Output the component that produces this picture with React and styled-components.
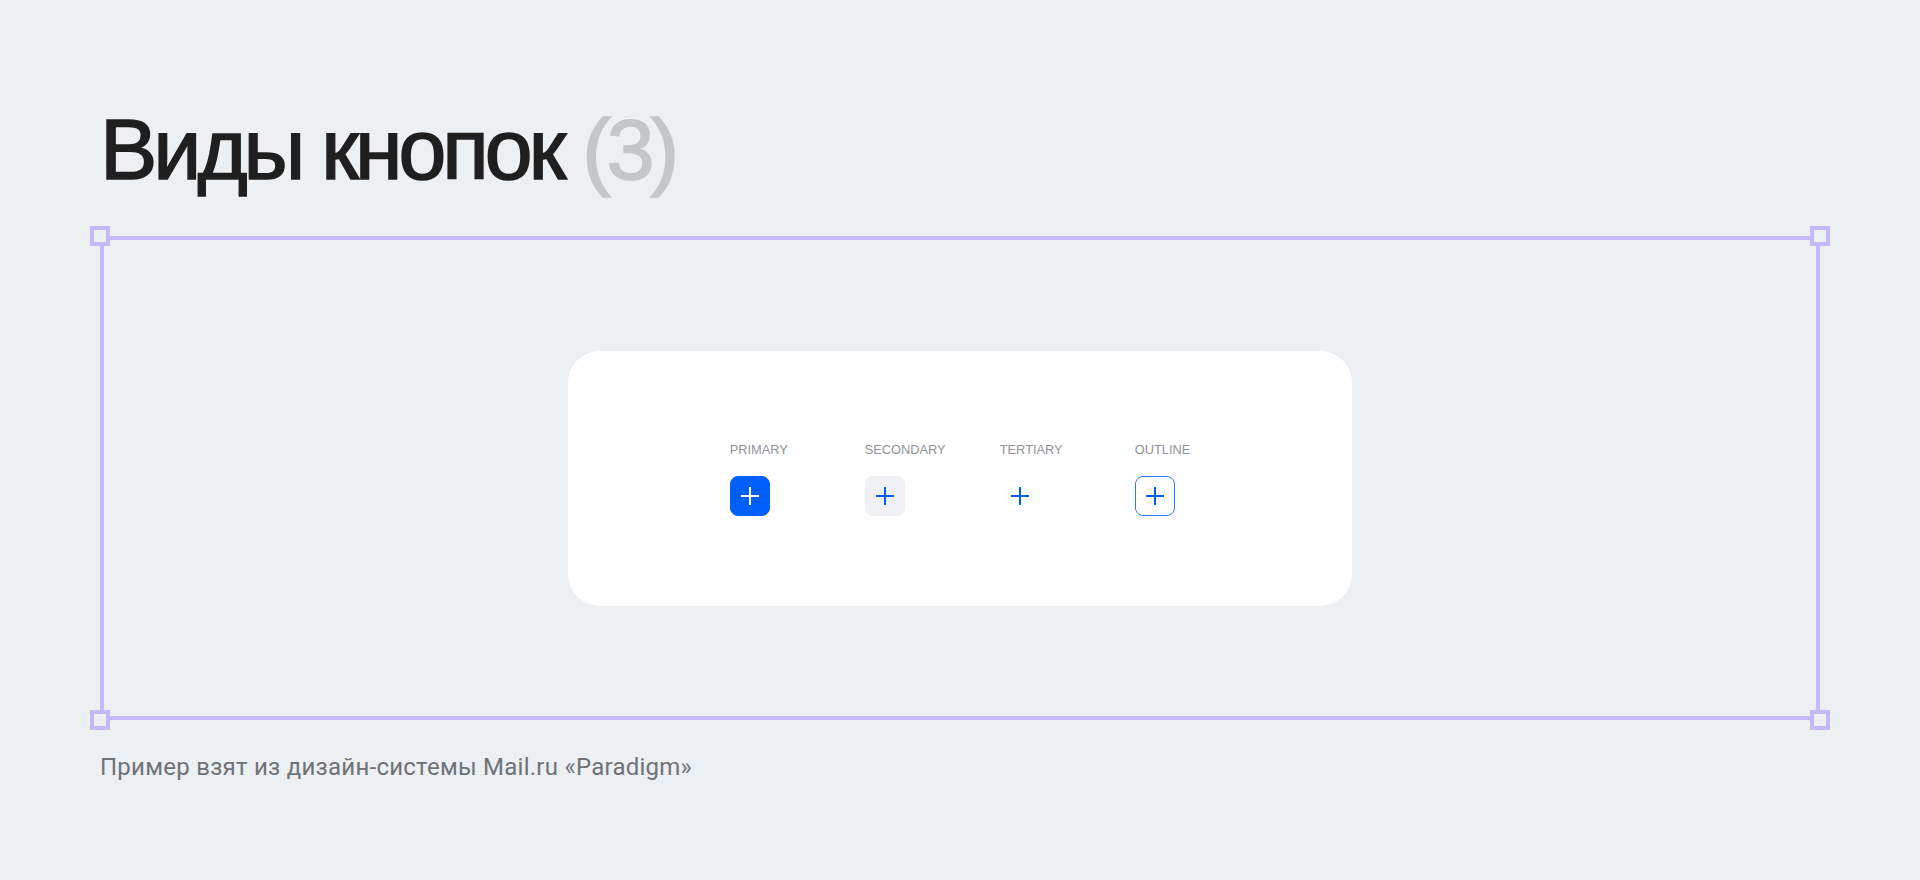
import React from "react";
import styled, { createGlobalStyle } from "styled-components";

const Global = createGlobalStyle`
  html, body { margin: 0; padding: 0; background: #edf0f3; }
  body { font-family: "Liberation Sans", Arial, sans-serif; }
`;

const Page = styled.div`
  box-sizing: border-box;
  width: 1920px;
  height: 880px;
  padding: 106px 100px 0;
  display: flex;
  flex-direction: column;
`;

const Title = styled.h1`
  margin: 0 0 44px;
  font-family: "Liberation Sans", Arial, sans-serif;
  font-weight: 400;
  font-size: 86px;
  line-height: 86px;
  letter-spacing: -4px;
  color: #1f1f1f;
  -webkit-text-stroke: 1.6px #1f1f1f;
`;

const Count = styled.span`
  color: #c3c7ca;
  -webkit-text-stroke: 1.6px #c3c7ca;
`;

const Frame = styled.div`
  position: relative;
  box-sizing: border-box;
  height: 484px;
  border: 4px solid #c6b9fa;
  display: flex;
  align-items: center;
  justify-content: center;
`;

const Handle = styled.span`
  position: absolute;
  box-sizing: border-box;
  width: 20px;
  height: 20px;
  border: 4px solid #c6b9fa;
  background: #edf0f3;
  ${(p) => (p.$top ? "top: -14px;" : "bottom: -14px;")}
  ${(p) => (p.$left ? "left: -14px;" : "right: -14px;")}
`;

const Card = styled.div`
  width: 784px;
  height: 255px;
  background: #ffffff;
  border-radius: 32px;
  display: flex;
  align-items: center;
  justify-content: center;
`;

const Row = styled.div`
  display: flex;
  align-items: flex-start;
  padding-top: 2px;
`;

const Column = styled.div`
  width: 135px;
  display: flex;
  flex-direction: column;
  align-items: flex-start;
  gap: 18px;
  &:last-child { width: auto; }
`;

const Label = styled.div`
  font-family: "Liberation Sans", Arial, sans-serif;
  font-size: 12.8px;
  line-height: 16px;
  color: #909296;
`;

const variants = {
  primary: "background: #005ff9; color: #ffffff; border: 1px solid #005ff9;",
  secondary: "background: #f0f1f4; color: #005ff9; border: 1px solid #f0f1f4;",
  tertiary: "background: transparent; color: #005ff9; border: 1px solid transparent;",
  outline: "background: #ffffff; color: #005ff9; border: 1px solid #2a78fa;",
};

const IconButton = styled.button`
  box-sizing: border-box;
  width: 40px;
  height: 40px;
  padding: 0;
  border-radius: 8px;
  display: flex;
  align-items: center;
  justify-content: center;
  cursor: pointer;
  ${(p) => variants[p.$variant]}
`;

const Caption = styled.p`
  margin: 33px 0 0;
  font-family: Roboto, "Noto Sans", sans-serif;
  font-size: 24px;
  line-height: 28px;
  letter-spacing: 0.25px;
  color: #6e7277;
`;

const Plus = () => (
  <svg width="18" height="18" viewBox="0 0 18 18" fill="none">
    <path d="M9 0v18M0 9h18" stroke="currentColor" strokeWidth="2" />
  </svg>
);

const buttons = [
  ["PRIMARY", "primary"],
  ["SECONDARY", "secondary"],
  ["TERTIARY", "tertiary"],
  ["OUTLINE", "outline"],
];

export default function App() {
  return (
    <>
      <Global />
      <Page>
        <Title>
          Виды кнопок <Count>(3)</Count>
        </Title>
        <Frame>
          <Handle $top $left />
          <Handle $top />
          <Handle $left />
          <Handle />
          <Card>
            <Row>
              {buttons.map(([label, v]) => (
                <Column key={v}>
                  <Label>{label}</Label>
                  <IconButton $variant={v} aria-label={label}>
                    <Plus />
                  </IconButton>
                </Column>
              ))}
            </Row>
          </Card>
        </Frame>
        <Caption>Пример взят из дизайн-системы Mail.ru «Paradigm»</Caption>
      </Page>
    </>
  );
}
